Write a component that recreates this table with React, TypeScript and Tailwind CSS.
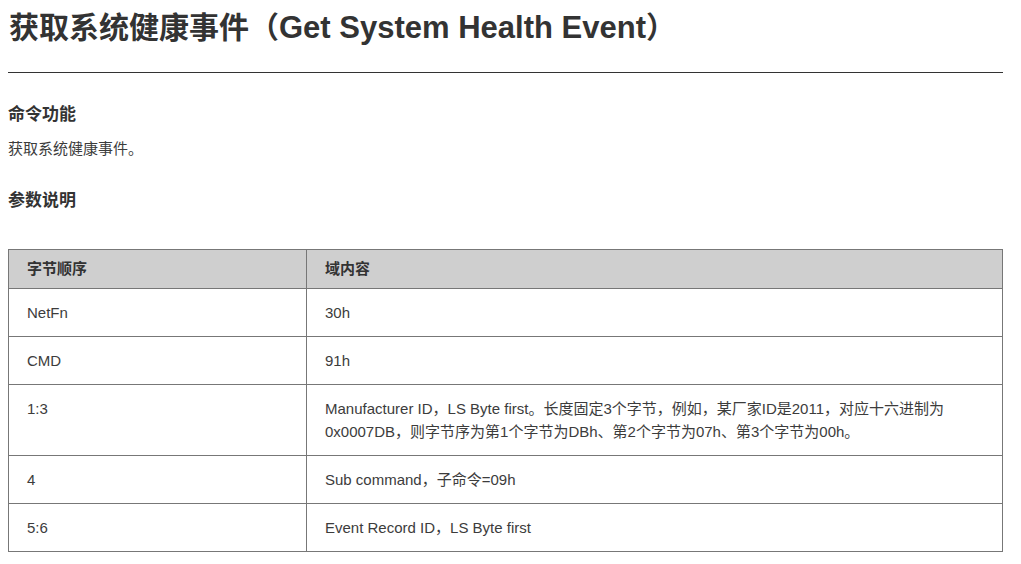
import React from 'react';

const rows: [string, string][] = [
  ['NetFn', '30h'],
  ['CMD', '91h'],
  [
    '1:3',
    'Manufacturer ID，LS Byte first。长度固定3个字节，例如，某厂家ID是2011，对应十六进制为0x0007DB，则字节序为第1个字节为DBh、第2个字节为07h、第3个字节为00h。',
  ],
  ['4', 'Sub command，子命令=09h'],
  ['5:6', 'Event Record ID，LS Byte first'],
];

export default function App() {
  return (
    <div
      className="w-[1011px] bg-white px-2 pt-[6px] text-[#333]"
      style={{ fontFamily: '"Liberation Sans", "Noto Sans CJK SC", sans-serif' }}
    >
      <h1 className="pl-px text-[30px] font-bold leading-[44px]">
        获取系统健康事件（<span className="text-[31px]">Get System Health Event</span>）
      </h1>
      <hr className="mt-[22px] border-t border-[#333]" />
      <h3 className="mt-[29px] text-[17px] font-bold leading-[26px]">命令功能</h3>
      <p className="mt-[9px] text-[15px] leading-[23px] text-[#3c3c3c]">获取系统健康事件。</p>
      <h3 className="mt-[28px] text-[17px] font-bold leading-[26px]">参数说明</h3>
      <table className="mt-[35px] w-full border-collapse text-[15px] leading-[23px] text-[#3c3c3c]">
        <thead>
          <tr className="bg-[#cfcfcf]">
            <th className="w-[298px] border border-[#777] px-[18px] pt-[7px] pb-[8px] text-left font-bold text-[#333]">字节顺序</th>
            <th className="border border-[#777] px-[18px] pt-[7px] pb-[8px] text-left font-bold text-[#333]">域内容</th>
          </tr>
        </thead>
        <tbody>
          {rows.map(([a, b]) => (
            <tr key={a}>
              <td className="border border-[#777] px-[18px] py-3 align-top">{a}</td>
              <td className="border border-[#777] py-3 pl-[18px] pr-[30px] align-top">{b}</td>
            </tr>
          ))}
        </tbody>
      </table>
    </div>
  );
}
